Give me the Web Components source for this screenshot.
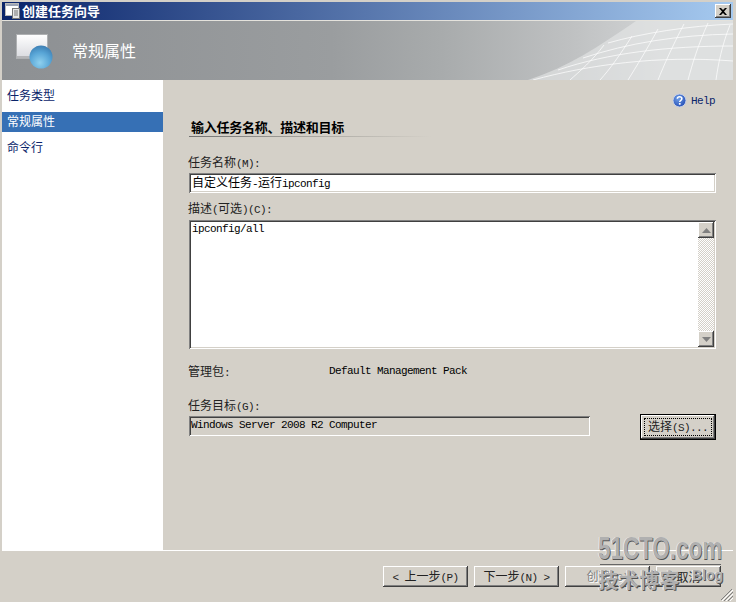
<!DOCTYPE html>
<html lang="zh">
<head>
<meta charset="utf-8">
<title>创建任务向导</title>
<style>
  html, body { margin: 0; padding: 0; background: #d4d0c8; }
</style>
</head>
<body>
<task-wizard>
  <wizard-titlebar slot="title">创建任务向导</wizard-titlebar>
  <wizard-banner slot="banner">常规属性</wizard-banner>
  <wizard-nav slot="nav">
    <nav-item>任务类型</nav-item>
    <nav-item selected>常规属性</nav-item>
    <nav-item>命令行</nav-item>
  </wizard-nav>

  <help-link><mono-text>Help</mono-text></help-link>
  <section-heading>输入任务名称、描述和目标</section-heading>

  <field-label style="margin-top:18px">任务名称<mono-text>(M):</mono-text></field-label>
  <text-box style="margin-top:2px">自定义任务<mono-text>-</mono-text>运行<mono-text>ipconfig</mono-text></text-box>
  <field-label style="margin-top:8px">描述<mono-text>(</mono-text>可选<mono-text>)(C):</mono-text></field-label>
  <memo-box style="margin-top:3px"><mono-text>ipconfig/all</mono-text></memo-box>

  <info-row style="margin-top:15px">
    <field-label>管理包<mono-text>:</mono-text></field-label>
    <mono-text slot="value">Default Management Pack</mono-text>
  </info-row>

  <target-row style="margin-top:18px">
    <field-label slot="label">任务目标<mono-text>(G):</mono-text></field-label>
    <mono-text slot="value">Windows Server 2008 R2 Computer</mono-text>
    <wizard-button slot="action" focused style="width:76px;height:26px">选择<mono-text>(S)...</mono-text></wizard-button>
  </target-row>

  <wizard-button slot="footer" style="width:85px"><mono-text>&lt; </mono-text>上一步<mono-text>(P)</mono-text></wizard-button>
  <wizard-button slot="footer" style="width:85px">下一步<mono-text>(N) &gt;</mono-text></wizard-button>
  <wizard-button slot="footer" disabled style="width:85px">创建<mono-text>(C)</mono-text></wizard-button>
  <wizard-button slot="footer" style="width:65px">取消</wizard-button>

  <site-watermark slot="overlay"></site-watermark>
</task-wizard>

<script>
const CJK = '"Noto Sans CJK SC", "Liberation Sans", sans-serif';
const BEVEL_OUT = "box-shadow: inset -1px -1px #404040, inset 1px 1px #fff, inset -2px -2px #808080, inset 2px 2px #d4d0c8;";
const SUNKEN = "box-shadow: inset 1px 1px #808080, inset -1px -1px #fff, inset 2px 2px #404040, inset -2px -2px #d4d0c8;";

class MonoText extends HTMLElement {
    constructor() {
        super();
        // no whitespace here: the host keeps spaces and line breaks
        this.attachShadow({ mode: "open" }).innerHTML = `<style>:host { display: inline; font-family: "Liberation Mono", monospace; font-size: 11px; letter-spacing: -0.6px; white-space: pre; }</style><slot></slot>`;
    }
}

class TaskWizard extends HTMLElement {
    constructor() {
        super();
        this.attachShadow({ mode: "open" }).innerHTML = `
        <style>
            :host {
                display: block; position: relative; box-sizing: border-box;
                width: 736px; height: 602px; padding: 2px 3px 0 2px; overflow: hidden;
                background: #d4d0c8; color: #000;
                font-family: ${CJK}; font-size: 12px; line-height: 16px;
            }
            .body { display: flex; height: 471px; }
            .main {
                flex: 1; box-sizing: border-box; display: flex; flex-direction: column;
                padding: 12px 17px 0 26px; border-bottom: 1px solid #fff;
            }
            .footer { display: flex; justify-content: flex-end; gap: 6px; padding: 15px 12px 0 0; }
            .grip { position: absolute; right: 3px; bottom: 1px; }
        </style>
        <slot name="title"></slot>
        <slot name="banner"></slot>
        <div class="body">
            <slot name="nav"></slot>
            <div class="main"><slot></slot></div>
        </div>
        <div class="footer"><slot name="footer"></slot></div>
        <svg class="grip" width="13" height="13" viewBox="0 0 13 13" fill="none">
            <path d="M12 1 1 12M13 4 4 13M13 8 8 13" stroke="#808080"/>
            <path d="M13 2 2 13M13 6 6 13M13 10 10 13" stroke="#fff"/>
        </svg>
        <slot name="overlay"></slot>`;
    }
}

class WizardTitlebar extends HTMLElement {
    constructor() {
        super();
        this.attachShadow({ mode: "open" }).innerHTML = `
        <style>
            :host {
                display: flex; align-items: center; height: 18px; padding-left: 3px; gap: 1px;
                background: linear-gradient(90deg, #0a246a, #a6caf0);
                color: #fff; font-weight: 700; font-size: 13px;
            }
            .label { flex: 1; line-height: 18px; }
            .close {
                width: 16px; height: 14px; margin-right: 2px; background: #d4d0c8;
                display: flex; align-items: center; justify-content: center; ${BEVEL_OUT}
            }
        </style>
        <svg width="16" height="16" viewBox="0 0 16 16">
            <rect x="0.5" y="0.5" width="13" height="12" fill="#fff" stroke="#b8b8b8"/>
            <rect x="1" y="1" width="12" height="2" fill="#9aa3b5"/>
            <rect x="7.5" y="5.5" width="7" height="10" fill="#e8e8e8" stroke="#777"/>
            <path d="M9 8h4M9 10h4M9 12h4" stroke="#777"/>
        </svg>
        <span class="label"><slot></slot></span>
        <span class="close">
            <svg width="8" height="7" viewBox="0 0 8 7"><path d="M0 0h2l2 2 2-2h2L5 3.500 8 7H6L4 5 2 7H0l3-3.500z"/></svg>
        </span>`;
    }
}

class WizardBanner extends HTMLElement {
    constructor() {
        super();
        this.attachShadow({ mode: "open" }).innerHTML = `
        <style>
            :host {
                display: flex; align-items: center; position: relative; box-sizing: border-box;
                height: 60px; border-top: 1px solid #e4e2dc; padding-left: 14px; gap: 18px; overflow: hidden;
                background: linear-gradient(90deg, #8d9093 0%, #9a9d9f 45%, #a8abac 60%, #bfc1c2 78%, #d2d4d5 90%);
                color: #fff; font-size: 16px;
            }
            .label { margin-top: -1px; position: relative; }
            .mesh { position: absolute; right: 0; top: 0; }
        </style>
        <svg class="mesh" width="205" height="59" viewBox="0 0 205 59" fill="none">
            <path d="M0 59C40 46 70 26 108 0H205V59Z" fill="#e6e7e7" fill-opacity=".6"/>
            <g stroke="#fff" stroke-opacity=".7">
                <path d="M5 59C60 44 130 34 205 40"/>
                <path d="M30 49C80 32 140 25 205 25"/>
                <path d="M55 37C100 22 150 14 205 13"/>
                <path d="M80 22C115 12 160 5 205 3"/>
                <path d="M42 59C52 50 64 40 76 24"/>
                <path d="M72 59C82 48 92 34 104 15"/>
                <path d="M100 59C108 46 118 30 130 8"/>
                <path d="M130 59C136 44 144 26 156 3"/>
                <path d="M160 59C164 44 170 24 180 2"/>
                <path d="M188 59C190 44 194 24 202 4"/>
            </g>
        </svg>
        <svg width="38" height="36" viewBox="0 0 38 36" style="margin-top:3px;position:relative">
            <defs>
                <linearGradient id="pane" x1="0" y1="0" x2="0" y2="1"><stop offset="0" stop-color="#fff"/><stop offset="1" stop-color="#d8d9de"/></linearGradient>
                <radialGradient id="ball" cx=".45" cy=".75" r=".75"><stop offset="0" stop-color="#8fd0ee"/><stop offset=".6" stop-color="#58a5d6"/><stop offset="1" stop-color="#3d7fb4"/></radialGradient>
            </defs>
            <rect x="0.500" y="0.500" width="31" height="24" fill="url(#pane)" stroke="#aeb0b2"/>
            <rect x="1" y="22" width="30" height="2" fill="#b4b5b8"/>
            <circle cx="25" cy="23" r="11.500" fill="url(#ball)"/>
        </svg>
        <span class="label"><slot></slot></span>`;
    }
}

class WizardNav extends HTMLElement {
    constructor() {
        super();
        this.attachShadow({ mode: "open" }).innerHTML = `
        <style>
            :host { display: flex; flex-direction: column; gap: 6px; width: 161px; flex: none; padding-top: 6px; box-sizing: border-box; background: #fff; }
        </style>
        <slot></slot>`;
    }
}

class NavItem extends HTMLElement {
    constructor() {
        super();
        this.attachShadow({ mode: "open" }).innerHTML = `
        <style>
            :host { display: block; height: 20px; line-height: 18px; padding-left: 5px; color: #0a246a; }
            :host([selected]) { background: #3670b5; color: #fff; }
        </style>
        <slot></slot>`;
    }
}

class HelpLink extends HTMLElement {
    constructor() {
        super();
        this.attachShadow({ mode: "open" }).innerHTML = `
        <style>
            :host { display: flex; justify-content: flex-end; align-items: center; gap: 4px; height: 16px; color: #0a246a; margin-right: 1px; }
        </style>
        <svg width="15" height="15" viewBox="0 0 15 15">
            <defs><radialGradient id="h" cx=".4" cy=".35" r=".75"><stop offset="0" stop-color="#6f9fe8"/><stop offset="1" stop-color="#1d45b0"/></radialGradient></defs>
            <circle cx="7.500" cy="7.500" r="6.500" fill="url(#h)" stroke="#c5cfe6"/>
            <path d="M5.300 5.800C5.400 4.400 6.400 3.800 7.600 3.800 9 3.800 9.900 4.600 9.900 5.700 9.900 7.200 7.700 7.400 7.700 9" fill="none" stroke="#fff" stroke-width="1.500"/>
            <rect x="6.900" y="10" width="1.700" height="1.700" fill="#fff"/>
        </svg>
        <span><slot></slot></span>`;
    }
}

class SectionHeading extends HTMLElement {
    constructor() {
        super();
        this.attachShadow({ mode: "open" }).innerHTML = `
        <style>
            :host {
                display: block; margin-top: 11px; padding: 0 0 2px 2px; font-size: 13px; font-weight: 700; line-height: 16px;
                letter-spacing: -0.25px; width: 240px; white-space: nowrap; background: linear-gradient(90deg, #707070, #a8a6a0 50%, transparent) left bottom / 100% 1px no-repeat;
            }
        </style>
        <slot></slot>`;
    }
}

class FieldLabel extends HTMLElement {
    constructor() {
        super();
        this.attachShadow({ mode: "open" }).innerHTML = `
        <style>
            :host { display: block; height: 16px; line-height: 14px; margin-left: -1px; white-space: nowrap; color: #222; }
        </style>
        <slot></slot>`;
    }
}

class TextBox extends HTMLElement {
    constructor() {
        super();
        this.attachShadow({ mode: "open" }).innerHTML = `
        <style>
            :host { display: block; box-sizing: border-box; height: 20px; padding: 0 3px; line-height: 18px; background: #fff; ${SUNKEN} white-space: nowrap; }
        </style>
        <slot></slot>`;
    }
}

class MemoBox extends HTMLElement {
    constructor() {
        super();
        this.attachShadow({ mode: "open" }).innerHTML = `
        <style>
            :host { display: flex; box-sizing: border-box; height: 129px; padding: 2px; background: #fff; ${SUNKEN} }
            .text { flex: 1; padding: 0 1px; line-height: 10px; }
            .bar {
                width: 16px; display: flex; flex-direction: column; justify-content: space-between;
                background: repeating-conic-gradient(#d4d0c8 0 25%, #fff 0 50%) 0 0 / 2px 2px;
            }
            .arrow { height: 16px; display: flex; align-items: center; justify-content: center; background: #d4d0c8; ${BEVEL_OUT} }
        </style>
        <div class="text"><slot></slot></div>
        <div class="bar">
            <div class="arrow"><svg width="9" height="5"><path d="M4.500 0 9 5H0z" fill="#808080"/></svg></div>
            <div class="arrow"><svg width="9" height="5"><path d="M0 0h9L4.500 5z" fill="#808080"/></svg></div>
        </div>`;
    }
}

class InfoRow extends HTMLElement {
    constructor() {
        super();
        this.attachShadow({ mode: "open" }).innerHTML = `
        <style>
            :host { display: grid; grid-template-columns: 140px 1fr; height: 16px; align-items: center; }
            .value { margin-top: -4px; }
        </style>
        <slot></slot>
        <span class="value"><slot name="value"></slot></span>`;
    }
}

class TargetRow extends HTMLElement {
    constructor() {
        super();
        this.attachShadow({ mode: "open" }).innerHTML = `
        <style>
            :host { display: flex; align-items: flex-start; justify-content: space-between; }
            .left { width: 401px; }
            .value {
                box-sizing: border-box; height: 20px; margin-top: 2px; padding: 0 2px; line-height: 13px;
                background: #d4d0c8; white-space: nowrap; ${SUNKEN}
            }
            .action { margin-top: 16px; }
        </style>
        <div class="left">
            <slot name="label"></slot>
            <div class="value"><slot name="value"></slot></div>
        </div>
        <div class="action"><slot name="action"></slot></div>`;
    }
}

class WizardButton extends HTMLElement {
    constructor() {
        super();
        this.attachShadow({ mode: "open" }).innerHTML = `
        <style>
            :host {
                display: flex; align-items: center; justify-content: center; box-sizing: border-box; height: 21px;
                background: #d4d0c8; white-space: nowrap; color: #222; position: relative; ${BEVEL_OUT}
            }
            :host([disabled]) { color: #808080; text-shadow: 1px 1px #fff; }
            :host([focused]) { border: 1px solid #000; }
            .focus { display: none; position: absolute; inset: 3px; border: 1px dotted #000; }
            :host([focused]) .focus { display: block; }
            .text { display: block; }
        </style>
        <span class="focus"></span>
        <span class="text"><slot></slot></span>`;
    }
}

class SiteWatermark extends HTMLElement {
    constructor() {
        super();
        this.attachShadow({ mode: "open" }).innerHTML = `
        <style>
            :host { position: absolute; left: 598px; top: 533px; width: 126px; height: 60px; pointer-events: none; color: #b0b0b0; font-weight: 700; white-space: nowrap; }
            span { position: absolute; text-shadow: 1px 1px #555, -1px 0 #eee; }
            .site { left: 0; top: -1px; font: 700 32px/32px "Liberation Sans", sans-serif; transform: scale(.7, 1); transform-origin: 0 0; }
            .cn { left: 0; top: 35px; font: 700 20px/24px ${CJK}; letter-spacing: .5px; }
            .blog { left: 94px; top: 33px; font: 700 14px/18px "Liberation Sans", sans-serif; }
            i { position: absolute; left: 2px; right: 3px; top: 31px; height: 1px; background: #666; }
        </style>
        <i></i>
        <span class="site">51CTO.com</span>
        <span class="cn">技术博客</span>
        <span class="blog">Blog</span>`;
    }
}

customElements.define("mono-text", MonoText);
customElements.define("task-wizard", TaskWizard);
customElements.define("wizard-titlebar", WizardTitlebar);
customElements.define("wizard-banner", WizardBanner);
customElements.define("wizard-nav", WizardNav);
customElements.define("nav-item", NavItem);
customElements.define("help-link", HelpLink);
customElements.define("section-heading", SectionHeading);
customElements.define("field-label", FieldLabel);
customElements.define("text-box", TextBox);
customElements.define("memo-box", MemoBox);
customElements.define("info-row", InfoRow);
customElements.define("target-row", TargetRow);
customElements.define("wizard-button", WizardButton);
customElements.define("site-watermark", SiteWatermark);
</script>
</body>
</html>
